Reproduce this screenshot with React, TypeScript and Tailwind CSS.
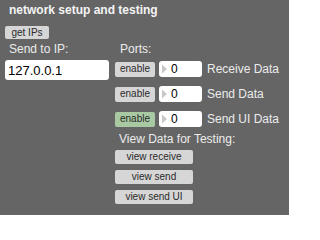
import React from "react";

function Btn({ children, className = "" }: { children: React.ReactNode; className?: string }) {
  return (
    <div
      className={
        "flex items-center justify-center rounded-[2px] text-[10px] leading-none text-[#2a2a2a] " +
        className
      }
    >
      {children}
    </div>
  );
}

function PortRow({ label, green = false }: { label: string; green?: boolean }) {
  return (
    <div className="flex items-center h-[16px]">
      <Btn className={"w-[40px] h-[15px] " + (green ? "bg-[#a9c9a2]" : "bg-[#d6d6d6]")}>enable</Btn>
      <div className="ml-[4px] w-[43px] h-[16px] bg-white rounded-[3px] flex items-center">
        <svg width="8" height="12" viewBox="0 0 8 12" className="ml-[2px]">
          <polygon points="1,1.5 6,6 1,10.5" fill="#c8c8c8" />
        </svg>
        <span className="ml-[2px] text-[12px] leading-none text-black">0</span>
      </div>
      <span className="ml-[5px] text-[12px] leading-none text-[#ececec]">{label}</span>
    </div>
  );
}

export default function App() {
  return (
    <div className="w-[289px] h-[215px] bg-[#656565] overflow-hidden font-['Liberation_Sans',Arial,sans-serif]">
      <div className="pl-[9px] pt-[3px] text-[12px] leading-[15px] font-bold text-[#f4f4f4]">
        network setup and testing
      </div>
      <div className="mt-[8px] ml-[5px]">
        <Btn className="w-[44px] h-[13px] bg-[#d6d6d6]">get IPs</Btn>
      </div>
      <div className="flex mt-[3px]">
        <div className="ml-[5px] w-[104px] flex flex-col">
          <div className="pl-[4px] text-[12px] leading-[14px] text-[#ececec]">Send to IP:</div>
          <div className="mt-[4px] h-[20px] bg-white rounded-[3px] flex items-center pl-[3px] text-[13px] leading-none text-black">
            127.0.0.1
          </div>
        </div>
        <div className="ml-[6px] flex flex-col">
          <div className="pl-[5px] text-[12px] leading-[14px] text-[#ececec]">Ports:</div>
          <div className="mt-[5px] flex flex-col gap-[9px]">
            <PortRow label="Receive Data" />
            <PortRow label="Send Data" />
            <PortRow label="Send UI Data" green />
          </div>
          <div className="mt-[5px] pl-[4px] text-[12px] leading-[14px] text-[#ececec]">
            View Data for Testing:
          </div>
          <div className="mt-[4px] flex flex-col gap-[6px]">
            <Btn className="w-[78px] h-[14px] bg-[#d6d6d6]">view receive</Btn>
            <Btn className="w-[78px] h-[14px] bg-[#d6d6d6]">view send</Btn>
            <Btn className="w-[78px] h-[14px] bg-[#d6d6d6]">view send UI</Btn>
          </div>
        </div>
      </div>
    </div>
  );
}
